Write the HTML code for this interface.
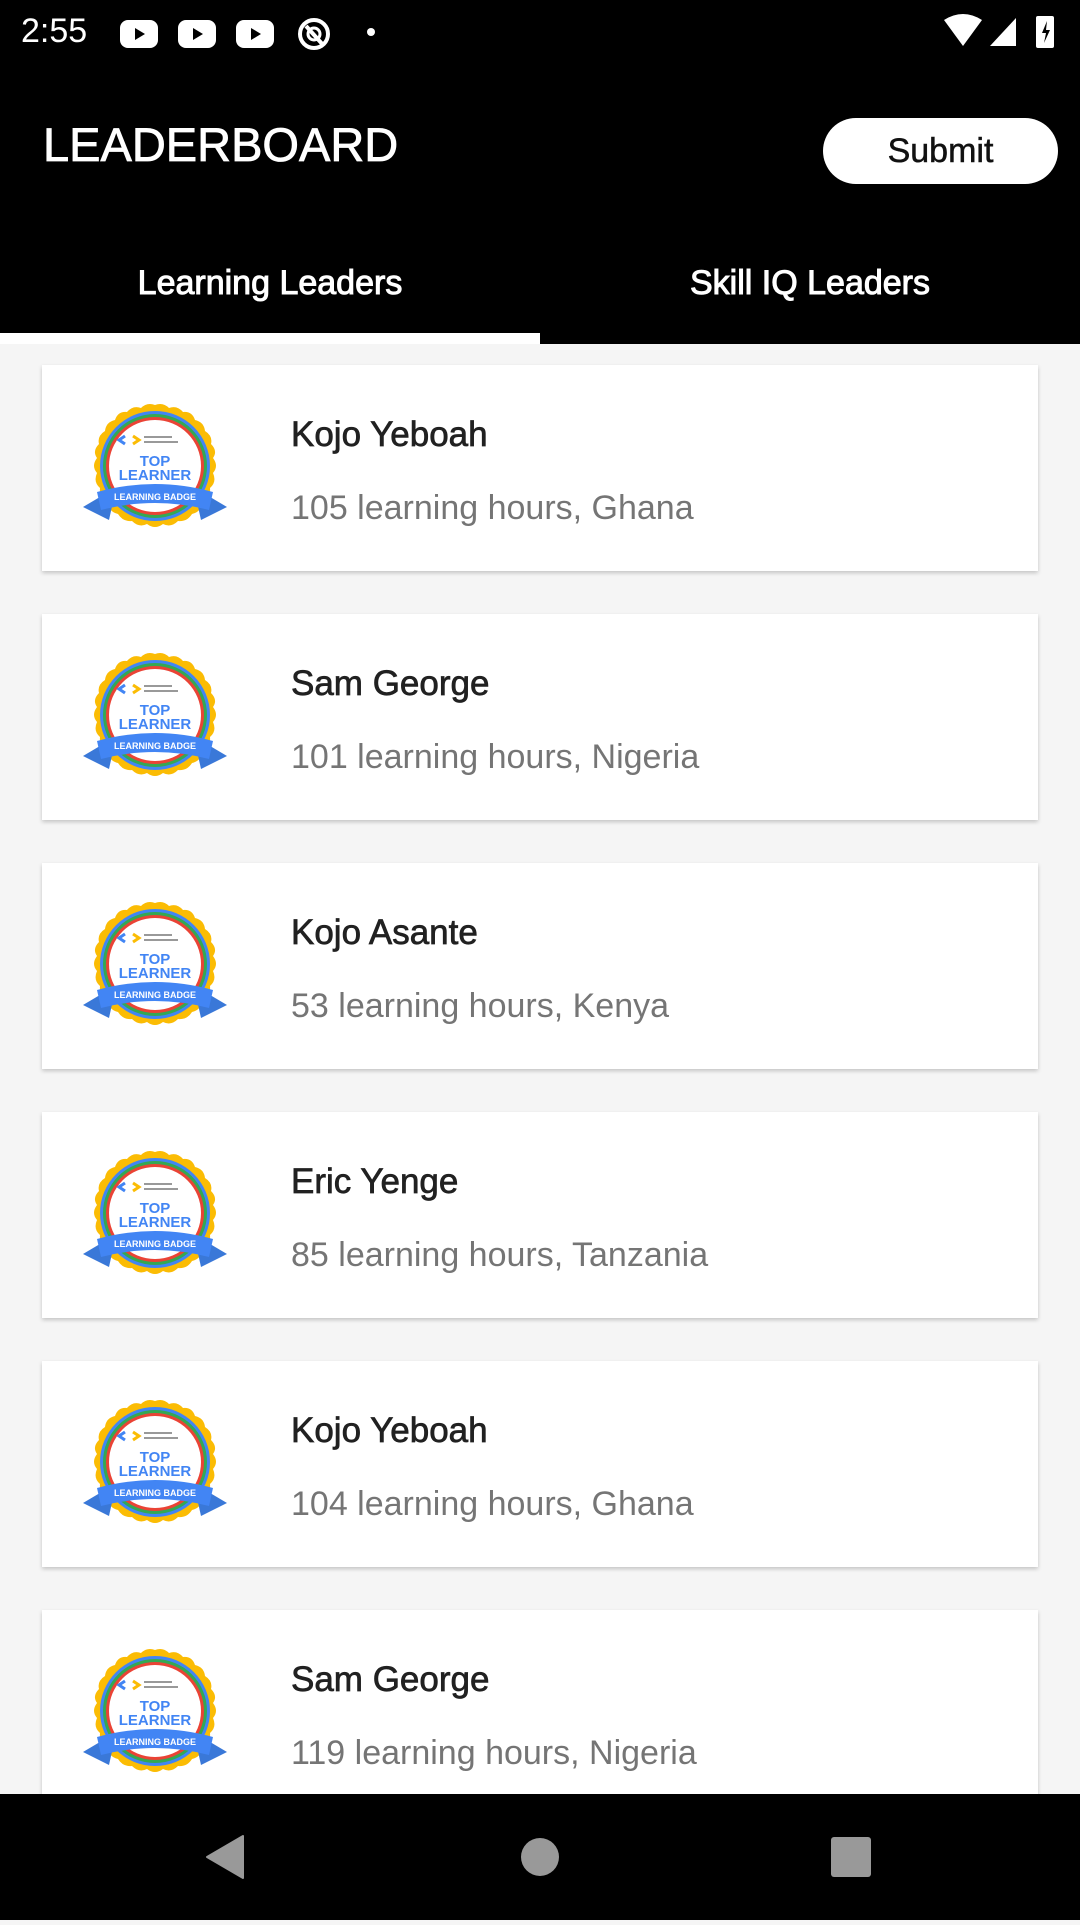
<!DOCTYPE html>
<html><head><meta charset="utf-8"><style>
*{margin:0;padding:0;box-sizing:border-box}
body{width:1080px;height:1920px;background:#f5f5f5;font-family:"Liberation Sans",sans-serif;position:relative;overflow:hidden}
.top{position:absolute;left:0;top:0;width:1080px;height:344px;background:#000}
.time{position:absolute;left:21px;top:12px;color:#fff;font-size:34px}
.title{position:absolute;left:43px;top:117px;color:#fff;font-size:47px;-webkit-text-stroke:0.8px #fff}
.submit{position:absolute;left:823px;top:118px;width:235px;height:66px;border-radius:33px;background:#fff;color:#111;font-size:34px;text-align:center;line-height:66px;-webkit-text-stroke:0.5px #111}
.tab{position:absolute;top:264px;color:#fff;font-size:34px;width:540px;text-align:center;-webkit-text-stroke:1px #fff}
.ind{position:absolute;left:0;top:333px;width:540px;height:11px;background:#fff}
.card{position:absolute;left:42px;width:996px;height:206px;background:#fff;box-shadow:0 2px 4px rgba(0,0,0,.2)}
.card svg{position:absolute;left:41px;top:37px}
.name{position:absolute;left:249px;top:50px;font-size:35px;color:#212121;-webkit-text-stroke:0.7px #212121}
.sub{position:absolute;left:249px;top:124px;font-size:34px;color:#757575}
.nav{position:absolute;left:0;top:1794px;width:1080px;height:126px;background:#000}
</style></head><body>
<svg width="0" height="0" style="position:absolute"><defs>
<g id="b">
<path d="M72 3 Q80 0 86 6 Q94 3 100 10 Q109 9 112 18 Q121 20 122 29 Q130 34 128 42 Q135 49 130 56 Q136 64 130 71 Q134 80 127 86 Q128 96 120 100 Q118 110 109 112 Q104 120 95 119 Q88 126 80 122 Q72 128 64 122 Q56 126 49 119 Q40 120 35 112 Q26 110 24 100 Q16 96 17 86 Q10 80 14 71 Q8 64 14 56 Q9 49 16 42 Q14 34 22 29 Q23 20 32 18 Q35 9 44 10 Q50 3 58 6 Q64 0 72 3Z" fill="#fbbc04"/>
<circle cx="72" cy="64" r="55" fill="#4285f4"/>
<circle cx="72" cy="64" r="52" fill="#34a853"/>
<circle cx="72" cy="64" r="49" fill="#ea4335"/>
<circle cx="72" cy="64" r="46" fill="#fff"/>
<path d="M42 34 l-6 4 6 4" stroke="#4285f4" stroke-width="3" fill="none"/>
<path d="M50 34 l6 4 -6 4" stroke="#fbbc04" stroke-width="3" fill="none"/>
<rect x="61" y="34" width="28" height="2" fill="#999"/><rect x="61" y="39" width="34" height="2" fill="#999"/>
<text x="72" y="64" text-anchor="middle" font-size="15" font-weight="bold" fill="#4285f4" font-family="Liberation Sans">TOP</text>
<text x="72" y="78" text-anchor="middle" font-size="15" font-weight="bold" fill="#4285f4" font-family="Liberation Sans">LEARNER</text>
<path d="M0 105 L22 92 L30 100 L26 118 Z" fill="#3a78d8"/>
<path d="M144 105 L122 92 L114 100 L118 118 Z" fill="#3a78d8"/>
<path d="M14 90 Q72 74 130 90 L126 108 Q72 94 18 108Z" fill="#4285f4"/>
<text x="72" y="98" text-anchor="middle" font-size="9" font-weight="bold" fill="#fff" font-family="Liberation Sans">LEARNING BADGE</text>
</g></defs></svg>
<div class="top">
<div class="time">2:55</div>
<svg style="position:absolute;left:118px;top:16px" width="260" height="36">
<rect x="2" y="4" width="38" height="28" rx="8" fill="#fff"/><path d="M17 12 l10 6 -10 6z" fill="#000"/>
<rect x="60" y="4" width="38" height="28" rx="8" fill="#fff"/><path d="M75 12 l10 6 -10 6z" fill="#000"/>
<rect x="118" y="4" width="38" height="28" rx="8" fill="#fff"/><path d="M133 12 l10 6 -10 6z" fill="#000"/>
<circle cx="196" cy="18" r="14" stroke="#fff" stroke-width="4" fill="none"/><circle cx="196" cy="18" r="6" stroke="#fff" stroke-width="3" fill="none"/><path d="M188 10 L206 30" stroke="#fff" stroke-width="4"/>
<circle cx="253" cy="16" r="4" fill="#fff"/>
</svg>
<svg style="position:absolute;left:940px;top:12px" width="130" height="40">
<path d="M4 8 Q23 -4 42 8 L23 34Z" fill="#fff"/>
<path d="M50 34 L76 6 L76 34Z" fill="#fff"/>
<rect x="96" y="4" width="18" height="32" rx="2" fill="#fff"/><path d="M107 9 l-5 12 h4 l-2 10 6 -13 h-4z" fill="#000"/>
</svg>
<div class="title">LEADERBOARD</div>
<div class="submit">Submit</div>
<div class="tab" style="left:0">Learning Leaders</div>
<div class="tab" style="left:540px">Skill IQ Leaders</div>
<div class="ind"></div>
</div>

<div class="card" style="top:365px"><svg width="144" height="130"><use href="#b"/></svg><div class="name">Kojo Yeboah</div><div class="sub">105 learning hours, Ghana</div></div>
<div class="card" style="top:614px"><svg width="144" height="130"><use href="#b"/></svg><div class="name">Sam George</div><div class="sub">101 learning hours, Nigeria</div></div>
<div class="card" style="top:863px"><svg width="144" height="130"><use href="#b"/></svg><div class="name">Kojo Asante</div><div class="sub">53 learning hours, Kenya</div></div>
<div class="card" style="top:1112px"><svg width="144" height="130"><use href="#b"/></svg><div class="name">Eric Yenge</div><div class="sub">85 learning hours, Tanzania</div></div>
<div class="card" style="top:1361px"><svg width="144" height="130"><use href="#b"/></svg><div class="name">Kojo Yeboah</div><div class="sub">104 learning hours, Ghana</div></div>
<div class="card" style="top:1610px"><svg width="144" height="130"><use href="#b"/></svg><div class="name">Sam George</div><div class="sub">119 learning hours, Nigeria</div></div>

<div class="nav">
<svg width="1080" height="126">
<path d="M243 42 L243 84 L207 63Z" fill="#999" stroke="#999" stroke-width="2" stroke-linejoin="round"/>
<circle cx="540" cy="63" r="19" fill="#999"/>
<rect x="831" y="43" width="40" height="40" rx="3" fill="#999"/>
</svg>
</div>
</body></html>
